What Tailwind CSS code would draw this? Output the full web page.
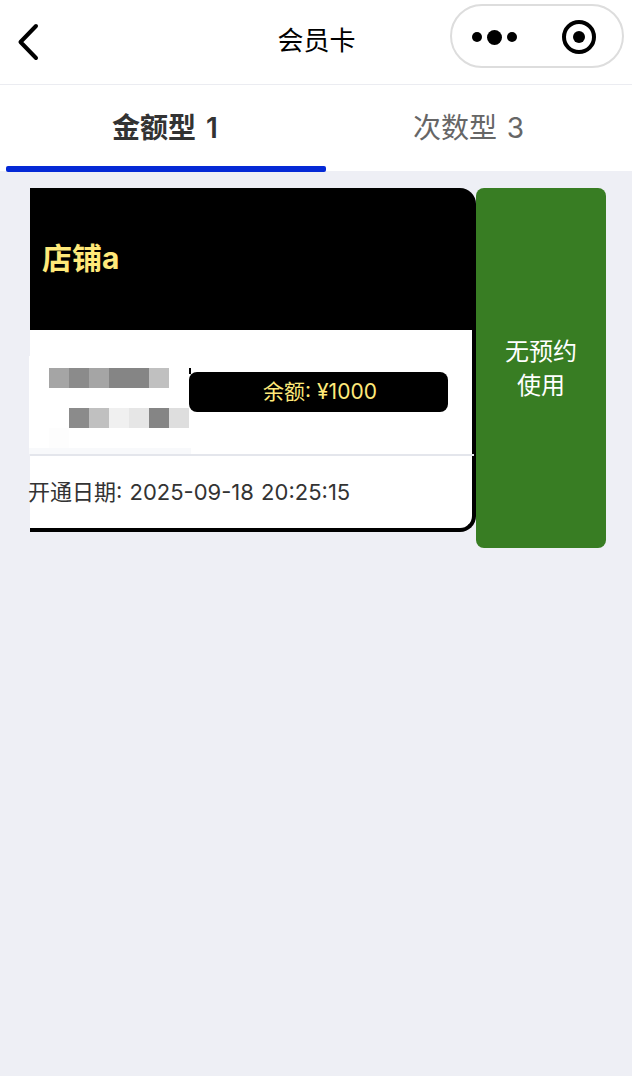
<!DOCTYPE html>
<html lang="zh-CN">
<head>
  <meta charset="UTF-8" />
  <meta name="viewport" content="width=device-width, initial-scale=1.0" />
  <title>会员卡</title>
  <script src="https://cdn.jsdelivr.net/npm/@tailwindcss/browser@4"></script>
</head>
<body class="bg-[#eeeff5] h-[1076px] overflow-hidden font-['Inter','Noto_Sans_CJK_SC',sans-serif]">

  <!-- 导航栏 -->
  <div class="h-[85px] bg-white border-b border-[#ebecf1] grid grid-cols-[1fr_auto_1fr] items-center">
    <div class="pl-[17px]">
      <svg width="28" height="40" viewBox="0 0 28 40" fill="none" stroke="#000" stroke-width="4" stroke-linecap="round" stroke-linejoin="round">
        <path d="M19 4 3.5 20 19 36" />
      </svg>
    </div>
    <div class="text-[26px] leading-[36px] text-black ml-[1px] -mt-[2px]">会员卡</div>
    <div class="flex justify-end pr-2 -mt-[12px]">
      <div class="w-[174px] h-[64px] rounded-full border-2 border-[#dddddd] bg-white flex items-center pl-[20px] gap-[45px]">
        <div class="flex items-center gap-[5px] mt-[2px]">
          <span class="w-[10px] h-[10px] rounded-full bg-black"></span>
          <span class="w-[15px] h-[15px] rounded-full bg-black"></span>
          <span class="w-[10px] h-[10px] rounded-full bg-black"></span>
        </div>
        <div class="w-[34px] h-[34px] rounded-full border-[4px] border-black flex items-center justify-center mt-[2px]">
          <span class="w-[12px] h-[12px] rounded-full bg-black"></span>
        </div>
      </div>
    </div>
  </div>

  <!-- 标签 -->
  <div class="h-[86px] bg-white pl-[6px] flex">
    <div class="w-[320px] relative flex justify-center pt-[24px]">
      <span class="text-[28px] leading-[38px] font-semibold text-[#333333] [word-spacing:3px] -ml-[2px]">金额型 1</span>
      <div class="absolute left-0 right-0 bottom-[-1px] h-[6px] rounded-[2px] bg-[#0429d6]"></div>
    </div>
    <div class="w-[286px] flex justify-center pt-[24px]">
      <span class="text-[28px] leading-[38px] text-[#666666] [word-spacing:2px] -ml-[1px]">次数型 3</span>
    </div>
  </div>

  <!-- 卡片 -->
  <div class="flex items-start pl-[30px] pt-[17px]">
    <div class="w-[446px] flex flex-col">
      <div class="h-[142px] bg-black rounded-tr-[16px] flex items-center pl-[12px] pb-[2px]">
        <span class="text-[30px] font-bold text-[#ffe97a]">店铺a</span>
      </div>
      <div class="h-[202px] bg-white border-r-4 border-b-4 border-black rounded-br-[16px] flex flex-col">
        <div class="h-[126px] -mr-[2px] border-b-2 border-[#e4e6ec] flex items-start">
          <div class="w-[162px] h-[98px] -ml-[1px] mt-[26px] pl-[20px] pt-[12px] bg-white flex flex-col">
            <div class="flex h-[20px]">
              <i class="w-[20px] bg-[#a5a5a5]"></i><i class="w-[20px] bg-[#8b8b8b]"></i><i class="w-[20px] bg-[#a5a5a5]"></i><i class="w-[40px] bg-[#858585]"></i><i class="w-[20px] bg-[#c0c0c0]"></i>
            </div>
            <div class="flex h-[20px] mt-[20px] ml-[20px]">
              <i class="w-[20px] bg-[#8b8b8b]"></i><i class="w-[20px] bg-[#c0c0c0]"></i><i class="w-[20px] bg-[#f0f0f0]"></i><i class="w-[20px] bg-[#e6e6e6]"></i><i class="w-[20px] bg-[#858585]"></i><i class="w-[20px] bg-[#dedede]"></i>
            </div>
            <div class="w-[20px] h-[20px] bg-[#fdfdfd]"></div>
            <div class="h-[6px] -ml-[20px] bg-[#f8f9fb]"></div>
          </div>
          <div class="relative -ml-[2px] mt-[42px] w-[259px] h-[40px] bg-black rounded-[8px] flex items-center justify-center pl-[3px] text-[21px] text-[#ffe97a]">
            <span class="absolute left-0 -top-[4px] w-[2px] h-[6px] bg-black"></span>
            余额: ¥1000
          </div>
        </div>
        <div class="flex-1 flex items-center -ml-[2px] text-[22px] text-[#333333] [word-spacing:1px]">开通日期: 2025-09-18 20:25:15</div>
      </div>
    </div>
    <div class="w-[130px] h-[360px] bg-[#387d23] rounded-[8px] flex items-center justify-center text-center text-[24px] leading-[34px] text-white pt-[2px]">无预约<br />使用</div>
  </div>

</body>
</html>
